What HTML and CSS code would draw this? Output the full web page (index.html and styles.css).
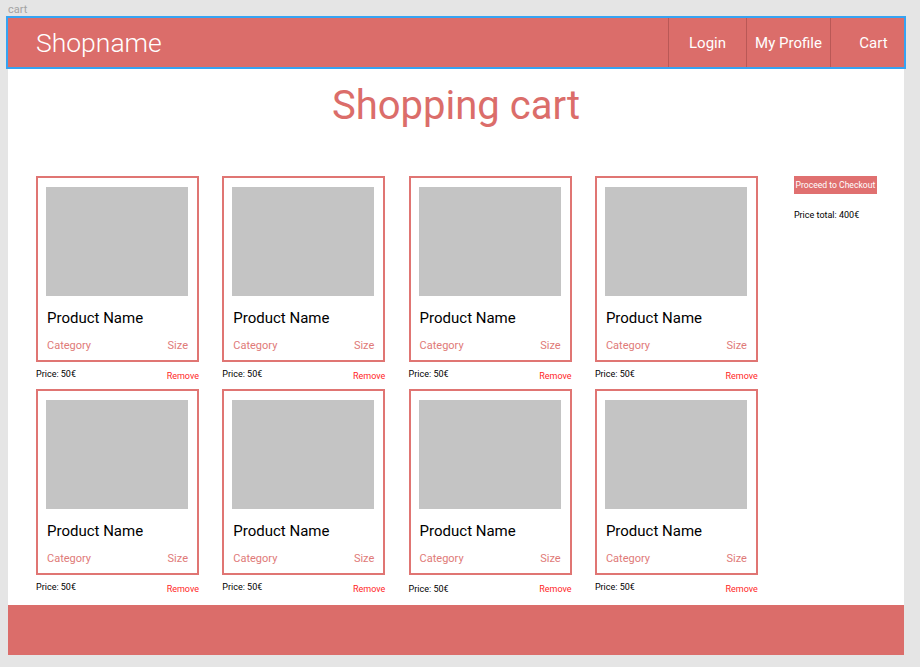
FILE: index.html
```html
<!DOCTYPE html>
<html>
<head>
<meta charset="utf-8">
<link rel="stylesheet" href="styles.css">
</head>
<body>
<div class="frame-label">cart</div>
<div class="frame">
  <header class="header">
    <div class="brand">Shopname</div>
    <nav class="nav">
      <a class="nav-item nav-login">Login</a>
      <a class="nav-item nav-profile">My Profile</a>
      <a class="nav-item nav-cart">Cart</a>
    </nav>
  </header>
  <main class="main">
    <h1 class="title">Shopping cart</h1>
    <div class="content">
      <div class="grid">
        <div class="item">
          <div class="card"><div class="thumb"></div><div class="name">Product Name</div><div class="meta"><span>Category</span><span>Size</span></div></div>
          <div class="price-row"><span class="price">Price: 50€</span><span class="remove">Remove</span></div>
        </div>
        <div class="item">
          <div class="card"><div class="thumb"></div><div class="name">Product Name</div><div class="meta"><span>Category</span><span>Size</span></div></div>
          <div class="price-row"><span class="price">Price: 50€</span><span class="remove">Remove</span></div>
        </div>
        <div class="item">
          <div class="card"><div class="thumb"></div><div class="name">Product Name</div><div class="meta"><span>Category</span><span>Size</span></div></div>
          <div class="price-row"><span class="price">Price: 50€</span><span class="remove">Remove</span></div>
        </div>
        <div class="item">
          <div class="card"><div class="thumb"></div><div class="name">Product Name</div><div class="meta"><span>Category</span><span>Size</span></div></div>
          <div class="price-row"><span class="price">Price: 50€</span><span class="remove">Remove</span></div>
        </div>
        <div class="item">
          <div class="card"><div class="thumb"></div><div class="name">Product Name</div><div class="meta"><span>Category</span><span>Size</span></div></div>
          <div class="price-row"><span class="price">Price: 50€</span><span class="remove">Remove</span></div>
        </div>
        <div class="item">
          <div class="card"><div class="thumb"></div><div class="name">Product Name</div><div class="meta"><span>Category</span><span>Size</span></div></div>
          <div class="price-row"><span class="price">Price: 50€</span><span class="remove">Remove</span></div>
        </div>
        <div class="item">
          <div class="card"><div class="thumb"></div><div class="name">Product Name</div><div class="meta"><span>Category</span><span>Size</span></div></div>
          <div class="price-row"><span class="price price-low">Price: 50€</span><span class="remove">Remove</span></div>
        </div>
        <div class="item">
          <div class="card"><div class="thumb"></div><div class="name">Product Name</div><div class="meta"><span>Category</span><span>Size</span></div></div>
          <div class="price-row"><span class="price">Price: 50€</span><span class="remove">Remove</span></div>
        </div>
      </div>
      <aside class="summary">
        <button class="checkout">Proceed to Checkout</button>
        <div class="total">Price total: 400€</div>
      </aside>
    </div>
  </main>
  <footer class="footer"></footer>
</div>
</body>
</html>
```

FILE: styles.css
```css
* { box-sizing: border-box; }

html, body {
  margin: 0;
  padding: 0;
}

body {
  background: #e5e5e5;
  font-family: Roboto, "Liberation Sans", sans-serif;
  width: 920px;
  height: 667px;
  overflow: hidden;
}

.frame-label {
  height: 18px;
  padding: 3px 0 0 8px;
  font-size: 11px;
  line-height: 13px;
  color: #a3a3a3;
}

.frame {
  margin-left: 8px;
  width: 896px;
  height: 637px;
  background: #ffffff;
  display: flex;
  flex-direction: column;
}

.header {
  height: 49px;
  background: #db6d6a;
  outline: 2px solid #36a3f2;
  display: flex;
  align-items: stretch;
  justify-content: space-between;
  color: #ffffff;
}

.brand {
  padding-left: 28px;
  font-size: 26.5px;
  line-height: 49px;
  font-weight: 300;
}

.nav {
  display: flex;
  align-items: stretch;
}

.nav-item {
  display: flex;
  align-items: center;
  justify-content: center;
  font-size: 15px;
  border-left: 1px solid #b95856;
  color: #ffffff;
}

.nav-login { width: 78px; }
.nav-profile { width: 84px; }
.nav-cart { width: 74px; padding-left: 12px; }

.main {
  flex: 1;
}

.title {
  margin: 15px 0 0;
  text-align: center;
  font-size: 40px;
  line-height: 47px;
  font-weight: 400;
  color: #db6d6a;
}

.content {
  display: flex;
  padding: 47px 0 0 28px;
}

.grid {
  display: grid;
  grid-template-columns: repeat(4, 163px);
  column-gap: 23.3px;
}

.card {
  width: 163px;
  height: 186px;
  border: 2px solid #e07573;
  padding: 9px 9px 0 8px;
}

.thumb {
  width: 142px;
  height: 109px;
  background: #c4c4c4;
}

.name {
  margin-top: 13px;
  padding-left: 1px;
  font-size: 15px;
  line-height: 18px;
  color: #000000;
}

.meta {
  margin-top: 12px;
  padding-left: 1px;
  display: flex;
  justify-content: space-between;
  font-size: 11px;
  line-height: 13px;
  color: #e07a78;
}

.price-row {
  height: 27px;
  display: flex;
  justify-content: space-between;
  align-items: flex-start;
  font-size: 9px;
  line-height: 11px;
}

.price {
  margin-top: 7px;
  color: #000000;
}

.price-low { margin-top: 9px; }

.remove {
  margin-top: 9px;
  color: #ff1f1f;
}

.summary {
  margin-left: 36px;
  width: 83px;
}

.checkout {
  display: block;
  width: 83px;
  height: 18px;
  border: none;
  padding: 0;
  background: #e07070;
  color: #ffffff;
  font-family: Roboto, "Liberation Sans", sans-serif;
  font-size: 8.6px;
  line-height: 18px;
  text-align: center;
  white-space: nowrap;
}

.total {
  margin-top: 16px;
  font-size: 9px;
  line-height: 11px;
  color: #000000;
  white-space: nowrap;
}

.footer {
  height: 50px;
  background: #db6d6a;
}
```
